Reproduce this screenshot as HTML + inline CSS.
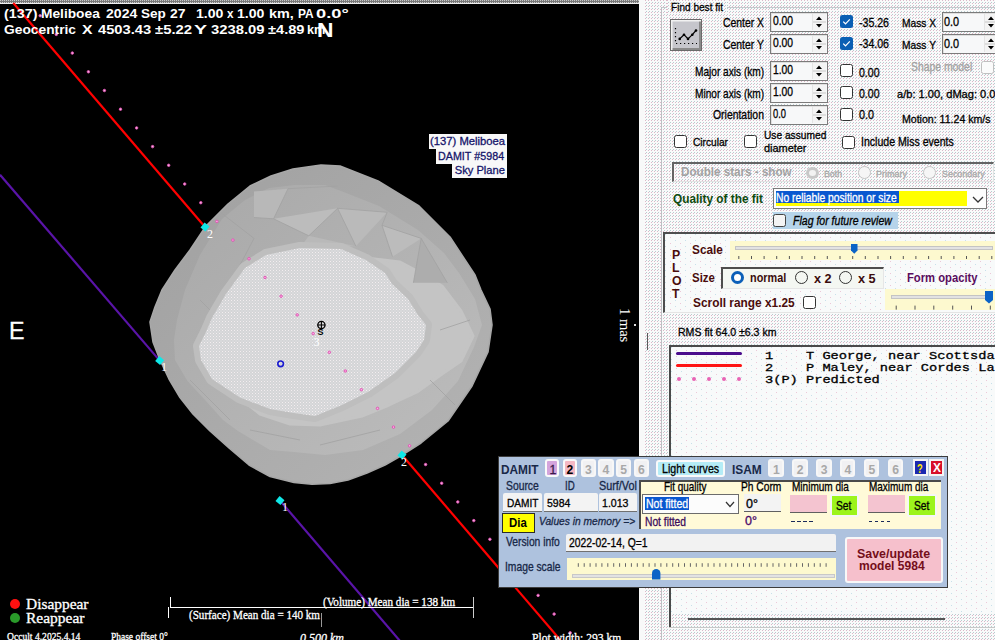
<!DOCTYPE html><html><head><meta charset="utf-8"><style>
*{margin:0;padding:0;box-sizing:border-box}
html,body{width:995px;height:640px;overflow:hidden}
body{position:relative;font-family:'Liberation Sans',sans-serif;font-size:12px;color:#000;background-color:#f9fafa;background-image:conic-gradient(at 1px 1px,transparent 270deg,#dcb8c8 0),conic-gradient(at 1px 1px,transparent 270deg,#b8ccd0 0);background-size:3px 3px,3px 3px;background-position:0 0,1px 2px;}
.a{position:absolute;white-space:nowrap}
</style></head><body><div style="position:absolute;left:0;top:0;width:639px;height:640px;background:#000;overflow:hidden">
<div style="position:absolute;left:0px;top:0px;width:640px;height:3px;background-color:#7a7a7a;background-image:conic-gradient(at 1px 1px,transparent 270deg,#c8c8c8 0);background-size:2px 2px"></div>
<div style="position:absolute;left:0px;top:3px;width:639px;height:1px;background:#f0f0f0"></div>
<svg width="639" height="640" style="position:absolute;left:0;top:0">
<defs><linearGradient id="ga" x1="0" y1="0" x2="1" y2="1"><stop offset="0" stop-color="#a0a0a0"/><stop offset="1" stop-color="#b4b4b4"/></linearGradient><linearGradient id="gb" x1="0" y1="0" x2="1" y2="1"><stop offset="0" stop-color="#a8a8a8"/><stop offset="1" stop-color="#bdbdbd"/></linearGradient><pattern id="dd" width="3" height="3" patternUnits="userSpaceOnUse"><rect width="1" height="1" fill="#f2eef0"/><rect x="1.5" y="1.5" width="1" height="1" fill="#e4e8ec"/></pattern></defs>
<line x1="13.3" y1="3" x2="205" y2="227" stroke="#ff0000" stroke-width="2.2"/>
<line x1="402" y1="455" x2="562" y2="642" stroke="#ff0000" stroke-width="2.2"/>
<line x1="0" y1="174.7" x2="159.7" y2="360.6" stroke="#5a14a8" stroke-width="2.2"/>
<line x1="280" y1="500.6" x2="400" y2="641" stroke="#5a14a8" stroke-width="2.2"/>
<polygon points="150,322 155,307 162,290 175,270 190,250 206,226 228,204 250,186 271,176 293,169 321,165 340,166 378,181 419,206 450,237 475,275 481,290 490,309 492,325 488,352 472,386 448,421 421,443 399,457 385,465 367,473 348,480 330,483.5 312,484.2 294,482.4 276,478 270,476.5 249,465 229,448 210,431 193,414 180,397.5 169,379 160,360 153,342" fill="url(#ga)" stroke="#a8a8a8" stroke-width="1.6" stroke-linejoin="round"/>
<polygon points="325,185 341,191 379,206 418,230 444,253 459,273 475,299 482,325 474,347 458,381 432,410 400,434 363,450 325,455 294,452 270,450 238,431 223,420 206,401 187.5,381 175,360 174,340 177,320 185,290 200,255 222,219 245,200 269,188 295,185" fill="url(#gb)"/>
<polygon points="366,258 400,262 417,271 442,286 461,311 473,336 461,361 442,374 417,392 389,405 362,416 320,425 290,424 260,414 240,398 300,300" fill="#c4c4c4" stroke="#c4c4c4" stroke-width="3" stroke-linejoin="round"/>
<polygon points="273.6,218.8 337.6,208.3 308.8,235.8" fill="#bcbcbc"/>
<polygon points="337.6,208.3 387.2,212.3 355.9,246.2" fill="#bababa"/>
<polygon points="382,225.3 421.2,238.4 392.5,256.7" fill="#bcbcbc"/>
<polygon points="254,191.4 288,188.7 273.6,218.8 254,217.5" fill="#b8b8b8"/>
<polygon points="421.2,238.4 447.3,282.8 413.4,282.8" fill="#adadad"/>
<polygon points="308.8,235.8 355.9,246.2 300,248" fill="#b9b9b9"/>
<line x1="273.6" y1="218.8" x2="308.8" y2="235.8" stroke="#a2a2a2" stroke-width="0.8"/>
<line x1="273.6" y1="218.8" x2="288" y2="188.7" stroke="#a2a2a2" stroke-width="0.8"/>
<line x1="308.8" y1="235.8" x2="337.6" y2="208.3" stroke="#a2a2a2" stroke-width="0.8"/>
<line x1="337.6" y1="208.3" x2="355.9" y2="246.2" stroke="#a2a2a2" stroke-width="0.8"/>
<line x1="337.6" y1="208.3" x2="387.2" y2="212.3" stroke="#a2a2a2" stroke-width="0.8"/>
<line x1="382" y1="225.3" x2="392.5" y2="256.7" stroke="#a2a2a2" stroke-width="0.8"/>
<line x1="382" y1="225.3" x2="421.2" y2="238.4" stroke="#a2a2a2" stroke-width="0.8"/>
<line x1="421.2" y1="238.4" x2="413.4" y2="282.8" stroke="#a2a2a2" stroke-width="0.8"/>
<line x1="421.2" y1="238.4" x2="447.3" y2="282.8" stroke="#a2a2a2" stroke-width="0.8"/>
<line x1="254" y1="217.5" x2="273.6" y2="218.8" stroke="#a2a2a2" stroke-width="0.8"/>
<line x1="220" y1="212" x2="254" y2="238.4" stroke="#a2a2a2" stroke-width="0.8"/>
<line x1="254" y1="238.4" x2="240" y2="265" stroke="#a2a2a2" stroke-width="0.8"/>
<line x1="288" y1="188.7" x2="337.6" y2="186" stroke="#a2a2a2" stroke-width="0.8"/>
<line x1="387.2" y1="212.3" x2="382" y2="225.3" stroke="#a2a2a2" stroke-width="0.8"/>
<line x1="200" y1="300" x2="230" y2="330" stroke="#a2a2a2" stroke-width="0.8"/>
<line x1="190" y1="380" x2="230" y2="420" stroke="#a2a2a2" stroke-width="0.8"/>
<line x1="250" y1="430" x2="300" y2="440" stroke="#a2a2a2" stroke-width="0.8"/>
<line x1="320" y1="445" x2="380" y2="430" stroke="#a2a2a2" stroke-width="0.8"/>
<line x1="440" y1="330" x2="470" y2="320" stroke="#a2a2a2" stroke-width="0.8"/>
<line x1="430" y1="380" x2="455" y2="405" stroke="#a2a2a2" stroke-width="0.8"/>
<polygon points="226,294 245,268 266,255 300,248 341,249 366,260 385,273 392,284 408,299 418,315 426,325 424,340 416,352 395,373 368,392 342,405 315,416 294,413 270,409 240,397.5 212,379 201,360 199,346 206,332 212,318" fill="#d4d4d6" stroke="#bebebe" stroke-width="12" stroke-linejoin="round"/>
<polygon points="226,294 245,268 266,255 300,248 341,249 366,260 385,273 392,284 408,299 418,315 426,325 424,340 416,352 395,373 368,392 342,405 315,416 294,413 270,409 240,397.5 212,379 201,360 199,346 206,332 212,318" fill="#d4d4d6"/>
<polygon points="226,294 245,268 266,255 300,248 341,249 366,260 385,273 392,284 408,299 418,315 426,325 424,340 416,352 395,373 368,392 342,405 315,416 294,413 270,409 240,397.5 212,379 201,360 199,346 206,332 212,318" fill="url(#dd)"/>
<circle cx="40.2" cy="15.7" r="1.25" fill="#f8b0e4" stroke="#e04cb0" stroke-width="0.9"/>
<circle cx="56.3" cy="34.4" r="1.25" fill="#f8b0e4" stroke="#e04cb0" stroke-width="0.9"/>
<circle cx="72.3" cy="53.1" r="1.25" fill="#f8b0e4" stroke="#e04cb0" stroke-width="0.9"/>
<circle cx="88.4" cy="71.8" r="1.25" fill="#f8b0e4" stroke="#e04cb0" stroke-width="0.9"/>
<circle cx="104.4" cy="90.5" r="1.25" fill="#f8b0e4" stroke="#e04cb0" stroke-width="0.9"/>
<circle cx="120.5" cy="109.2" r="1.25" fill="#f8b0e4" stroke="#e04cb0" stroke-width="0.9"/>
<circle cx="136.6" cy="127.9" r="1.25" fill="#f8b0e4" stroke="#e04cb0" stroke-width="0.9"/>
<circle cx="152.6" cy="146.6" r="1.25" fill="#f8b0e4" stroke="#e04cb0" stroke-width="0.9"/>
<circle cx="168.7" cy="165.3" r="1.25" fill="#f8b0e4" stroke="#e04cb0" stroke-width="0.9"/>
<circle cx="184.7" cy="184.0" r="1.25" fill="#f8b0e4" stroke="#e04cb0" stroke-width="0.9"/>
<circle cx="200.8" cy="202.7" r="1.25" fill="#f8b0e4" stroke="#e04cb0" stroke-width="0.9"/>
<circle cx="216.9" cy="221.4" r="1.25" fill="#f8b0e4" stroke="#e04cb0" stroke-width="0.9"/>
<circle cx="232.9" cy="240.1" r="1.25" fill="#f8b0e4" stroke="#e04cb0" stroke-width="0.9"/>
<circle cx="249.0" cy="258.8" r="1.25" fill="#f8b0e4" stroke="#e04cb0" stroke-width="0.9"/>
<circle cx="265.0" cy="277.5" r="1.25" fill="#f8b0e4" stroke="#e04cb0" stroke-width="0.9"/>
<circle cx="281.1" cy="296.2" r="1.25" fill="#f8b0e4" stroke="#e04cb0" stroke-width="0.9"/>
<circle cx="297.2" cy="314.9" r="1.25" fill="#f8b0e4" stroke="#e04cb0" stroke-width="0.9"/>
<circle cx="313.2" cy="333.6" r="1.25" fill="#f8b0e4" stroke="#e04cb0" stroke-width="0.9"/>
<circle cx="329.3" cy="352.3" r="1.25" fill="#f8b0e4" stroke="#e04cb0" stroke-width="0.9"/>
<circle cx="345.3" cy="371.0" r="1.25" fill="#f8b0e4" stroke="#e04cb0" stroke-width="0.9"/>
<circle cx="361.4" cy="389.7" r="1.25" fill="#f8b0e4" stroke="#e04cb0" stroke-width="0.9"/>
<circle cx="377.5" cy="408.4" r="1.25" fill="#f8b0e4" stroke="#e04cb0" stroke-width="0.9"/>
<circle cx="393.5" cy="427.1" r="1.25" fill="#f8b0e4" stroke="#e04cb0" stroke-width="0.9"/>
<circle cx="409.6" cy="445.8" r="1.25" fill="#f8b0e4" stroke="#e04cb0" stroke-width="0.9"/>
<circle cx="425.6" cy="464.5" r="1.25" fill="#f8b0e4" stroke="#e04cb0" stroke-width="0.9"/>
<circle cx="441.7" cy="483.2" r="1.25" fill="#f8b0e4" stroke="#e04cb0" stroke-width="0.9"/>
<circle cx="457.8" cy="501.9" r="1.25" fill="#f8b0e4" stroke="#e04cb0" stroke-width="0.9"/>
<circle cx="473.8" cy="520.6" r="1.25" fill="#f8b0e4" stroke="#e04cb0" stroke-width="0.9"/>
<circle cx="489.9" cy="539.3" r="1.25" fill="#f8b0e4" stroke="#e04cb0" stroke-width="0.9"/>
<circle cx="505.9" cy="558.0" r="1.25" fill="#f8b0e4" stroke="#e04cb0" stroke-width="0.9"/>
<circle cx="522.0" cy="576.7" r="1.25" fill="#f8b0e4" stroke="#e04cb0" stroke-width="0.9"/>
<circle cx="538.1" cy="595.4" r="1.25" fill="#f8b0e4" stroke="#e04cb0" stroke-width="0.9"/>
<circle cx="554.1" cy="614.1" r="1.25" fill="#f8b0e4" stroke="#e04cb0" stroke-width="0.9"/>
<circle cx="570.2" cy="632.8" r="1.25" fill="#f8b0e4" stroke="#e04cb0" stroke-width="0.9"/>
<rect x="201.8" y="223.8" width="6.4" height="6.4" fill="#10e8e8" transform="rotate(40 205 227)"/>
<rect x="398.8" y="451.8" width="6.4" height="6.4" fill="#10e8e8" transform="rotate(40 402 455)"/>
<rect x="156.5" y="357.40000000000003" width="6.4" height="6.4" fill="#10e8e8" transform="rotate(40 159.7 360.6)"/>
<rect x="276.8" y="497.40000000000003" width="6.4" height="6.4" fill="#10e8e8" transform="rotate(40 280 500.6)"/>
<text x="207" y="238" font-family="Liberation Serif" font-size="12" fill="#fff">2</text>
<text x="401" y="466" font-family="Liberation Serif" font-size="12" fill="#fff">2</text>
<text x="161" y="371" font-family="Liberation Serif" font-size="12" fill="#fff">1</text>
<text x="282" y="511" font-family="Liberation Serif" font-size="12" fill="#fff">1</text>
<circle cx="321.4" cy="325" r="3.6" fill="none" stroke="#000" stroke-width="1.3"/><path d="M317.5 325 H325.3 M321.4 321 V329" stroke="#000" stroke-width="1.1"/>
<text x="317.5" y="335" font-family="Liberation Sans" font-size="9" font-weight="bold" fill="#000">S</text>
<text x="313.5" y="346" font-family="Liberation Serif" font-size="12" fill="#fff">3</text>
<circle cx="280.6" cy="363.8" r="2.8" fill="none" stroke="#1a1ad0" stroke-width="1.6"/>
</svg>
<div class="a" style="left:3.60px;top:7.22px;font:normal bold 13.62px/13.62px 'Liberation Sans',sans-serif;color:#ffffff;transform:scaleX(1.0513);transform-origin:0 0;">(137)</div>
<div class="a" style="left:40.70px;top:7.22px;font:normal bold 13.62px/13.62px 'Liberation Sans',sans-serif;color:#ffffff;transform:scaleX(1.0098);transform-origin:0 0;">Meliboea</div>
<div class="a" style="left:105.50px;top:7.22px;font:normal bold 13.62px/13.62px 'Liberation Sans',sans-serif;color:#ffffff;transform:scaleX(1.0338);transform-origin:0 0;">2024</div>
<div class="a" style="left:140.70px;top:7.22px;font:normal bold 13.62px/13.62px 'Liberation Sans',sans-serif;color:#ffffff;transform:scaleX(0.9936);transform-origin:0 0;">Sep</div>
<div class="a" style="left:169.50px;top:7.22px;font:normal bold 13.62px/13.62px 'Liberation Sans',sans-serif;color:#ffffff;transform:scaleX(1.0239);transform-origin:0 0;">27</div>
<div class="a" style="left:195.60px;top:7.22px;font:normal bold 13.62px/13.62px 'Liberation Sans',sans-serif;color:#ffffff;transform:scaleX(1.0344);transform-origin:0 0;">1.00</div>
<div class="a" style="left:227.00px;top:7.22px;font:normal bold 13.62px/13.62px 'Liberation Sans',sans-serif;color:#ffffff;transform:scaleX(0.8588);transform-origin:0 0;">x</div>
<div class="a" style="left:237.40px;top:7.22px;font:normal bold 13.62px/13.62px 'Liberation Sans',sans-serif;color:#ffffff;transform:scaleX(1.0344);transform-origin:0 0;">1.00</div>
<div class="a" style="left:268.80px;top:7.22px;font:normal bold 13.62px/13.62px 'Liberation Sans',sans-serif;color:#ffffff;transform:scaleX(1.0575);transform-origin:0 0;">km,</div>
<div class="a" style="left:297.50px;top:7.22px;font:normal bold 13.62px/13.62px 'Liberation Sans',sans-serif;color:#ffffff;transform:scaleX(0.8774);transform-origin:0 0;">PA</div>
<div class="a" style="left:315.80px;top:7.22px;font:normal bold 13.62px/13.62px 'Liberation Sans',sans-serif;color:#ffffff;transform:scaleX(1.3423);transform-origin:0 0;">0.0°</div>
<div class="a" style="left:3.60px;top:23.22px;font:normal bold 13.62px/13.62px 'Liberation Sans',sans-serif;color:#ffffff;transform:scaleX(1.0127);transform-origin:0 0;">Geocentric</div>
<div class="a" style="left:81.70px;top:23.22px;font:normal bold 13.62px/13.62px 'Liberation Sans',sans-serif;color:#ffffff;transform:scaleX(1.1567);transform-origin:0 0;">X</div>
<div class="a" style="left:98.00px;top:23.22px;font:normal bold 13.62px/13.62px 'Liberation Sans',sans-serif;color:#ffffff;transform:scaleX(1.0814);transform-origin:0 0;">4503.43</div>
<div class="a" style="left:154.60px;top:23.22px;font:normal bold 13.62px/13.62px 'Liberation Sans',sans-serif;color:#ffffff;transform:scaleX(1.0926);transform-origin:0 0;">±5.22</div>
<div class="a" style="left:194.30px;top:23.22px;font:normal bold 13.62px/13.62px 'Liberation Sans',sans-serif;color:#ffffff;transform:scaleX(1.4432);transform-origin:0 0;">Y</div>
<div class="a" style="left:211.30px;top:23.22px;font:normal bold 13.62px/13.62px 'Liberation Sans',sans-serif;color:#ffffff;transform:scaleX(1.0875);transform-origin:0 0;">3238.09</div>
<div class="a" style="left:267.50px;top:23.22px;font:normal bold 13.62px/13.62px 'Liberation Sans',sans-serif;color:#ffffff;transform:scaleX(1.0749);transform-origin:0 0;">±4.89</div>
<div class="a" style="left:306.60px;top:23.22px;font:normal bold 13.62px/13.62px 'Liberation Sans',sans-serif;color:#ffffff;transform:scaleX(0.9354);transform-origin:0 0;">km</div>
<div class="a" style="left:316.50px;top:19.66px;font:normal bold 20.87px/20.87px 'Liberation Sans',sans-serif;color:#ffffff;transform:scaleX(1.0953);transform-origin:0 0;">N</div>
<div class="a" style="left:9.00px;top:318.76px;font:normal normal 24.64px/24.64px 'Liberation Sans',sans-serif;color:#ffffff;-webkit-text-stroke:0.3px #ffffff;transform:scaleX(0.9437);transform-origin:0 0;">E</div>
<div class="a" style="left:618px;top:307.5px;width:14px;height:36px;"><div style="position:absolute;left:14px;top:0;transform:rotate(90deg);transform-origin:0 0;font:14.5px/14px 'Liberation Serif',serif;color:#fff">1 mas</div></div>
<div style="position:absolute;left:634px;top:324px;width:2px;height:2px;background:#ddd"></div>
<div style="position:absolute;left:9.5px;top:599px;width:10px;height:10px;border-radius:50%;background:#ff1010"></div>
<div style="position:absolute;left:9.5px;top:612.5px;width:10px;height:10px;border-radius:50%;background:#2a9a2a"></div>
<div class="a" style="left:26.20px;top:597.14px;font:normal normal 14.77px/14.77px 'Liberation Serif',serif;color:#ffffff;-webkit-text-stroke:0.3px #ffffff;transform:scaleX(1.0436);transform-origin:0 0;">Disappear</div>
<div class="a" style="left:26.20px;top:610.64px;font:normal normal 14.77px/14.77px 'Liberation Serif',serif;color:#ffffff;-webkit-text-stroke:0.3px #ffffff;transform:scaleX(1.0487);transform-origin:0 0;">Reappear</div>
<div class="a" style="left:7.20px;top:630.86px;font:normal normal 10.77px/10.77px 'Liberation Serif',serif;color:#ffffff;-webkit-text-stroke:0.3px #ffffff;transform:scaleX(0.8895);transform-origin:0 0;">Occult&#160;4.2025.4.14</div>
<div class="a" style="left:110.70px;top:630.86px;font:normal normal 10.77px/10.77px 'Liberation Serif',serif;color:#ffffff;-webkit-text-stroke:0.3px #ffffff;transform:scaleX(0.8787);transform-origin:0 0;">Phase&#160;offset&#160;0°</div>
<div style="position:absolute;left:170px;top:607px;width:304px;height:1px;background:#fff"></div>
<div style="position:absolute;left:170px;top:597px;width:1px;height:11px;background:#fff"></div>
<div style="position:absolute;left:168px;top:607px;width:1px;height:11px;background:#fff"></div>
<div style="position:absolute;left:473px;top:597px;width:1px;height:21px;background:#ccc"></div>
<div style="position:absolute;left:321px;top:613px;width:1px;height:14px;background:#999"></div>
<div class="a" style="left:323.20px;top:596.34px;font:normal normal 12.00px/12.00px 'Liberation Serif',serif;color:#ffffff;-webkit-text-stroke:0.3px #ffffff;transform:scaleX(0.9290);transform-origin:0 0;">(Volume)&#160;Mean&#160;dia&#160;=&#160;138&#160;km</div>
<div class="a" style="left:189.00px;top:608.83px;font:normal normal 12.62px/12.62px 'Liberation Serif',serif;color:#ffffff;-webkit-text-stroke:0.3px #ffffff;transform:scaleX(0.8797);transform-origin:0 0;">(Surface)&#160;Mean&#160;dia&#160;=&#160;140&#160;km</div>
<div class="a" style="left:300.10px;top:630.95px;font:italic normal 13.08px/13.08px 'Liberation Serif',serif;color:#ffffff;-webkit-text-stroke:0.3px #ffffff;transform:scaleX(0.9167);transform-origin:0 0;">0.500&#160;km</div>
<div class="a" style="left:531.70px;top:630.95px;font:normal normal 13.08px/13.08px 'Liberation Serif',serif;color:#ffffff;-webkit-text-stroke:0.3px #ffffff;transform:scaleX(0.8884);transform-origin:0 0;">Plot&#160;width:&#160;293&#160;km</div>
</div>
<div style="position:absolute;left:429px;top:134px;width:78px;height:15px;background:#f8f8f8"></div>
<div style="position:absolute;left:436px;top:149px;width:71px;height:15px;background:#f8f8f8"></div>
<div style="position:absolute;left:452px;top:164px;width:55px;height:14px;background:#f8f8f8"></div>
<div class="a" style="left:430.00px;top:135.91px;font:normal normal 11.16px/11.16px 'Liberation Sans',sans-serif;color:#14146a;-webkit-text-stroke:0.3px #14146a;transform:scaleX(1.0092);transform-origin:0 0;">(137)&#160;Meliboea</div>
<div class="a" style="left:437.90px;top:151.01px;font:normal normal 11.16px/11.16px 'Liberation Sans',sans-serif;color:#14146a;-webkit-text-stroke:0.3px #14146a;transform:scaleX(0.9603);transform-origin:0 0;">DAMIT&#160;#5984</div>
<div class="a" style="left:454.70px;top:164.51px;font:normal normal 11.16px/11.16px 'Liberation Sans',sans-serif;color:#14146a;-webkit-text-stroke:0.3px #14146a;">Sky&#160;Plane</div>
<div style="position:absolute;left:639px;top:0px;width:5px;height:640px;background:#f8f9f9"></div>
<div style="position:absolute;left:646.5px;top:333px;width:1.2px;height:17px;background:#5a5a5a"></div>
<div style="position:absolute;left:661px;top:7px;width:334px;height:1px;background:#c4c8cc"></div>
<div style="position:absolute;left:661px;top:7px;width:1px;height:633px;background:#bcc0c4"></div>
<div style="position:absolute;left:667px;top:0px;width:60px;height:13px;background-color:#f9fafa;background-image:conic-gradient(at 1px 1px,transparent 270deg,#dcb8c8 0),conic-gradient(at 1px 1px,transparent 270deg,#b8ccd0 0);background-size:3px 3px,3px 3px;background-position:0 0,1px 2px;"></div>
<div class="a" style="left:670.50px;top:1.42px;font:normal normal 11.74px/11.74px 'Liberation Sans',sans-serif;color:#000;-webkit-text-stroke:0.3px #000;transform:scaleX(0.8585);transform-origin:0 0;">Find&#160;best&#160;fit</div>
<div style="position:absolute;left:669.5px;top:18.5px;width:32.5px;height:32.5px;background:#c6c6cc;border:1px solid #6a6a6a;box-shadow:inset 1.5px 1.5px 0 #f2f2f2,inset -2px -2px 0 #8a8a8a"></div>
<svg width="32" height="32" style="position:absolute;left:670px;top:19px"><path d="M9.7 19.9 L14 15.7 L18 19.9 L22.3 15.7 L26 11.5" stroke="#000" stroke-width="1.2" fill="none"/><g fill="#000"><circle cx="9.7" cy="19.9" r="1.3"/><circle cx="14" cy="15.7" r="1.3"/><circle cx="18" cy="19.9" r="1.3"/><circle cx="22.3" cy="15.7" r="1.3"/><circle cx="26" cy="11.5" r="1.3"/></g><path d="M5.5 9 V24.5 H27" stroke="#000" stroke-width="1.2" stroke-dasharray="1.2 2.8" fill="none"/></svg>
<div class="a" style="left:722.60px;top:16.74px;font:normal normal 12.90px/12.90px 'Liberation Sans',sans-serif;color:#000;-webkit-text-stroke:0.3px #000;transform:scaleX(0.8050);transform-origin:0 0;">Center&#160;X</div>
<div class="a" style="left:722.60px;top:38.84px;font:normal normal 12.90px/12.90px 'Liberation Sans',sans-serif;color:#000;-webkit-text-stroke:0.3px #000;transform:scaleX(0.8050);transform-origin:0 0;">Center&#160;Y</div>
<div class="a" style="left:694.50px;top:65.94px;font:normal normal 12.90px/12.90px 'Liberation Sans',sans-serif;color:#000;-webkit-text-stroke:0.3px #000;transform:scaleX(0.7843);transform-origin:0 0;">Major&#160;axis&#160;(km)</div>
<div class="a" style="left:694.50px;top:87.64px;font:normal normal 12.90px/12.90px 'Liberation Sans',sans-serif;color:#000;-webkit-text-stroke:0.3px #000;transform:scaleX(0.7843);transform-origin:0 0;">Minor&#160;axis&#160;(km)</div>
<div class="a" style="left:712.60px;top:108.84px;font:normal normal 12.90px/12.90px 'Liberation Sans',sans-serif;color:#000;-webkit-text-stroke:0.3px #000;transform:scaleX(0.8082);transform-origin:0 0;">Orientation</div>
<div style="position:absolute;left:770px;top:12px;width:58px;height:20px;background:#f7f8f9;border:1px solid #7b7b7b;box-shadow:inset 1px 1px 0 #e0e0e0"></div>
<svg width="15" height="17" style="position:absolute;left:812px;top:14px"><rect x="0" y="0" width="14" height="16" fill="#f4f4f4"/><line x1="0.5" y1="0" x2="0.5" y2="16" stroke="#e4e4e4"/><line x1="1" y1="8" x2="14" y2="8" stroke="#c8c8c8"/><path d="M4 6 L7 2.5 L10 6Z M4 10 L7 13.5 L10 10Z" fill="#000"/></svg>
<div class="a" style="left:772.50px;top:15.05px;font:normal normal 12.17px/12.17px 'Liberation Sans',sans-serif;color:#000;-webkit-text-stroke:0.3px #000;transform:scaleX(0.8496);transform-origin:0 0;">0.00</div>
<div style="position:absolute;left:770px;top:34px;width:58px;height:20px;background:#f7f8f9;border:1px solid #7b7b7b;box-shadow:inset 1px 1px 0 #e0e0e0"></div>
<svg width="15" height="17" style="position:absolute;left:812px;top:36px"><rect x="0" y="0" width="14" height="16" fill="#f4f4f4"/><line x1="0.5" y1="0" x2="0.5" y2="16" stroke="#e4e4e4"/><line x1="1" y1="8" x2="14" y2="8" stroke="#c8c8c8"/><path d="M4 6 L7 2.5 L10 6Z M4 10 L7 13.5 L10 10Z" fill="#000"/></svg>
<div class="a" style="left:772.50px;top:37.05px;font:normal normal 12.17px/12.17px 'Liberation Sans',sans-serif;color:#000;-webkit-text-stroke:0.3px #000;transform:scaleX(0.8496);transform-origin:0 0;">0.00</div>
<div style="position:absolute;left:770px;top:61px;width:58px;height:20px;background:#f7f8f9;border:1px solid #7b7b7b;box-shadow:inset 1px 1px 0 #e0e0e0"></div>
<svg width="15" height="17" style="position:absolute;left:812px;top:63px"><rect x="0" y="0" width="14" height="16" fill="#f4f4f4"/><line x1="0.5" y1="0" x2="0.5" y2="16" stroke="#e4e4e4"/><line x1="1" y1="8" x2="14" y2="8" stroke="#c8c8c8"/><path d="M4 6 L7 2.5 L10 6Z M4 10 L7 13.5 L10 10Z" fill="#000"/></svg>
<div class="a" style="left:772.50px;top:64.05px;font:normal normal 12.17px/12.17px 'Liberation Sans',sans-serif;color:#000;-webkit-text-stroke:0.3px #000;transform:scaleX(0.8496);transform-origin:0 0;">1.00</div>
<div style="position:absolute;left:770px;top:83px;width:58px;height:20px;background:#f7f8f9;border:1px solid #7b7b7b;box-shadow:inset 1px 1px 0 #e0e0e0"></div>
<svg width="15" height="17" style="position:absolute;left:812px;top:85px"><rect x="0" y="0" width="14" height="16" fill="#f4f4f4"/><line x1="0.5" y1="0" x2="0.5" y2="16" stroke="#e4e4e4"/><line x1="1" y1="8" x2="14" y2="8" stroke="#c8c8c8"/><path d="M4 6 L7 2.5 L10 6Z M4 10 L7 13.5 L10 10Z" fill="#000"/></svg>
<div class="a" style="left:772.50px;top:86.05px;font:normal normal 12.17px/12.17px 'Liberation Sans',sans-serif;color:#000;-webkit-text-stroke:0.3px #000;transform:scaleX(0.8496);transform-origin:0 0;">1.00</div>
<div style="position:absolute;left:770px;top:105px;width:58px;height:20px;background:#f7f8f9;border:1px solid #7b7b7b;box-shadow:inset 1px 1px 0 #e0e0e0"></div>
<svg width="15" height="17" style="position:absolute;left:812px;top:107px"><rect x="0" y="0" width="14" height="16" fill="#f4f4f4"/><line x1="0.5" y1="0" x2="0.5" y2="16" stroke="#e4e4e4"/><line x1="1" y1="8" x2="14" y2="8" stroke="#c8c8c8"/><path d="M4 6 L7 2.5 L10 6Z M4 10 L7 13.5 L10 10Z" fill="#000"/></svg>
<div class="a" style="left:772.50px;top:108.05px;font:normal normal 12.17px/12.17px 'Liberation Sans',sans-serif;color:#000;-webkit-text-stroke:0.3px #000;transform:scaleX(0.7693);transform-origin:0 0;">0.0</div>
<svg width="13" height="13" style="position:absolute;left:840px;top:15px"><rect x="0" y="0" width="13" height="13" rx="2.5" fill="#0a5fb4"/><path d="M3.2 6.6 L5.5 8.8 L9.8 4.4" stroke="#fff" stroke-width="1.2" fill="none"/></svg>
<div class="a" style="left:859.00px;top:16.65px;font:normal normal 12.17px/12.17px 'Liberation Sans',sans-serif;color:#000;-webkit-text-stroke:0.3px #000;transform:scaleX(0.8704);transform-origin:0 0;">-35.26</div>
<svg width="13" height="13" style="position:absolute;left:840px;top:37px"><rect x="0" y="0" width="13" height="13" rx="2.5" fill="#0a5fb4"/><path d="M3.2 6.6 L5.5 8.8 L9.8 4.4" stroke="#fff" stroke-width="1.2" fill="none"/></svg>
<div class="a" style="left:859.00px;top:38.45px;font:normal normal 12.17px/12.17px 'Liberation Sans',sans-serif;color:#000;-webkit-text-stroke:0.3px #000;transform:scaleX(0.8704);transform-origin:0 0;">-34.06</div>
<div style="position:absolute;left:840px;top:64px;width:13px;height:13px;border:1px solid #333;border-radius:2.5px;background:#fff"></div>
<div class="a" style="left:859.00px;top:66.55px;font:normal normal 12.17px/12.17px 'Liberation Sans',sans-serif;color:#000;-webkit-text-stroke:0.3px #000;transform:scaleX(0.8665);transform-origin:0 0;">0.00</div>
<div style="position:absolute;left:840px;top:86px;width:13px;height:13px;border:1px solid #333;border-radius:2.5px;background:#fff"></div>
<div class="a" style="left:859.00px;top:88.25px;font:normal normal 12.17px/12.17px 'Liberation Sans',sans-serif;color:#000;-webkit-text-stroke:0.3px #000;transform:scaleX(0.8665);transform-origin:0 0;">0.00</div>
<div style="position:absolute;left:840px;top:108px;width:13px;height:13px;border:1px solid #333;border-radius:2.5px;background:#fff"></div>
<div class="a" style="left:859.00px;top:108.75px;font:normal normal 12.17px/12.17px 'Liberation Sans',sans-serif;color:#000;-webkit-text-stroke:0.3px #000;transform:scaleX(0.8876);transform-origin:0 0;">0.0</div>
<div class="a" style="left:901.80px;top:17.74px;font:normal normal 11.59px/11.59px 'Liberation Sans',sans-serif;color:#000;-webkit-text-stroke:0.3px #000;transform:scaleX(0.8808);transform-origin:0 0;">Mass&#160;X</div>
<div class="a" style="left:901.80px;top:39.54px;font:normal normal 11.59px/11.59px 'Liberation Sans',sans-serif;color:#000;-webkit-text-stroke:0.3px #000;transform:scaleX(0.8808);transform-origin:0 0;">Mass&#160;Y</div>
<div style="position:absolute;left:942px;top:12px;width:58px;height:20px;background:#f7f8f9;border:1px solid #7b7b7b;box-shadow:inset 1px 1px 0 #e0e0e0"></div>
<svg width="15" height="17" style="position:absolute;left:984px;top:14px"><rect x="0" y="0" width="14" height="16" fill="#f4f4f4"/><line x1="0.5" y1="0" x2="0.5" y2="16" stroke="#e4e4e4"/><line x1="1" y1="8" x2="14" y2="8" stroke="#c8c8c8"/><path d="M4 6 L7 2.5 L10 6Z M4 10 L7 13.5 L10 10Z" fill="#000"/></svg>
<div style="position:absolute;left:942px;top:34px;width:58px;height:20px;background:#f7f8f9;border:1px solid #7b7b7b;box-shadow:inset 1px 1px 0 #e0e0e0"></div>
<svg width="15" height="17" style="position:absolute;left:984px;top:36px"><rect x="0" y="0" width="14" height="16" fill="#f4f4f4"/><line x1="0.5" y1="0" x2="0.5" y2="16" stroke="#e4e4e4"/><line x1="1" y1="8" x2="14" y2="8" stroke="#c8c8c8"/><path d="M4 6 L7 2.5 L10 6Z M4 10 L7 13.5 L10 10Z" fill="#000"/></svg>
<div class="a" style="left:944.40px;top:15.65px;font:normal normal 12.17px/12.17px 'Liberation Sans',sans-serif;color:#000;-webkit-text-stroke:0.3px #000;transform:scaleX(0.8936);transform-origin:0 0;">0.0</div>
<div class="a" style="left:944.40px;top:37.75px;font:normal normal 12.17px/12.17px 'Liberation Sans',sans-serif;color:#000;-webkit-text-stroke:0.3px #000;transform:scaleX(0.8936);transform-origin:0 0;">0.0</div>
<div class="a" style="left:911.40px;top:61.50px;font:normal normal 11.88px/11.88px 'Liberation Sans',sans-serif;color:#a3a3a3;-webkit-text-stroke:0.3px #a3a3a3;transform:scaleX(0.8745);transform-origin:0 0;">Shape&#160;model</div>
<div style="position:absolute;left:981px;top:61px;width:13px;height:13px;border:1px solid #c0c0c0;border-radius:2.5px;background:#fbfbfb"></div>
<div class="a" style="left:897.40px;top:89.73px;font:normal normal 10.43px/10.43px 'Liberation Sans',sans-serif;color:#000;-webkit-text-stroke:0.3px #000;transform:scaleX(1.0619);transform-origin:0 0;">a/b:&#160;1.00,&#160;dMag:&#160;0.00</div>
<div class="a" style="left:901.70px;top:114.44px;font:normal normal 11.01px/11.01px 'Liberation Sans',sans-serif;color:#000;-webkit-text-stroke:0.3px #000;transform:scaleX(0.9608);transform-origin:0 0;">Motion:&#160;11.24&#160;km/s</div>
<div style="position:absolute;left:674px;top:135px;width:13px;height:13px;border:1px solid #333;border-radius:2.5px;background:#fff"></div>
<div class="a" style="left:692.70px;top:136.77px;font:normal normal 11.45px/11.45px 'Liberation Sans',sans-serif;color:#000;-webkit-text-stroke:0.3px #000;transform:scaleX(0.8883);transform-origin:0 0;">Circular</div>
<div style="position:absolute;left:744px;top:135px;width:13px;height:13px;border:1px solid #333;border-radius:2.5px;background:#fff"></div>
<div class="a" style="left:763.50px;top:130.44px;font:normal normal 11.01px/11.01px 'Liberation Sans',sans-serif;color:#000;-webkit-text-stroke:0.3px #000;transform:scaleX(0.9264);transform-origin:0 0;">Use&#160;assumed</div>
<div class="a" style="left:763.50px;top:143.14px;font:normal normal 11.01px/11.01px 'Liberation Sans',sans-serif;color:#000;-webkit-text-stroke:0.3px #000;transform:scaleX(0.9931);transform-origin:0 0;">diameter</div>
<div style="position:absolute;left:842px;top:136px;width:13px;height:13px;border:1px solid #333;border-radius:2.5px;background:#fff"></div>
<div class="a" style="left:861.30px;top:136.33px;font:normal normal 12.32px/12.32px 'Liberation Sans',sans-serif;color:#000;-webkit-text-stroke:0.3px #000;transform:scaleX(0.8584);transform-origin:0 0;">Include&#160;Miss&#160;events</div>
<div style="position:absolute;left:672px;top:162px;width:321.5px;height:20px;border:solid #646464;border-width:2px 1px 1px 2px;border-color:#646464 #e2e2e2 #e2e2e2 #646464"></div>
<div class="a" style="left:680.70px;top:165.54px;font:normal bold 12.90px/12.90px 'Liberation Sans',sans-serif;color:#a2a2a2;transform:scaleX(0.9033);transform-origin:0 0;">Double&#160;stars&#160;-&#160;show</div>
<div style="position:absolute;left:806px;top:167px;width:13px;height:12px;border-radius:50%;border:3px solid #c8c8c8;background:#f2f2f2"></div>
<div class="a" style="left:824.40px;top:169.32px;font:normal normal 9.86px/9.86px 'Liberation Sans',sans-serif;color:#a8a8a8;-webkit-text-stroke:0.3px #a8a8a8;transform:scaleX(0.8938);transform-origin:0 0;">Both</div>
<div style="position:absolute;left:858px;top:166px;width:13px;height:13px;border-radius:50%;border:1px solid #c4c4c4;background:#f6f6f6"></div>
<div class="a" style="left:876.30px;top:169.32px;font:normal normal 9.86px/9.86px 'Liberation Sans',sans-serif;color:#a8a8a8;-webkit-text-stroke:0.3px #a8a8a8;transform:scaleX(0.9114);transform-origin:0 0;">Primary</div>
<div style="position:absolute;left:923px;top:166px;width:13px;height:13px;border-radius:50%;border:1px solid #c4c4c4;background:#f6f6f6"></div>
<div class="a" style="left:941.60px;top:169.32px;font:normal normal 9.86px/9.86px 'Liberation Sans',sans-serif;color:#a8a8a8;-webkit-text-stroke:0.3px #a8a8a8;transform:scaleX(0.9052);transform-origin:0 0;">Secondary</div>
<div class="a" style="left:673.40px;top:192.98px;font:normal bold 12.03px/12.03px 'Liberation Sans',sans-serif;color:#0e4a0e;transform:scaleX(0.9842);transform-origin:0 0;">Quality&#160;of&#160;the&#160;fit</div>
<div style="position:absolute;left:773px;top:188px;width:214px;height:21px;background:#fdfdfd;border:1px solid #7a7a7a"></div>
<div style="position:absolute;left:776px;top:191px;width:191px;height:15px;background:#ffff00"></div>
<div style="position:absolute;left:776px;top:191px;width:123px;height:12px;background:#0a58d0"></div>
<div class="a" style="left:776.40px;top:192.15px;font:normal normal 12.17px/12.17px 'Liberation Sans',sans-serif;color:#fff;-webkit-text-stroke:0.3px #fff;transform:scaleX(0.8459);transform-origin:0 0;">No&#160;reliable&#160;position&#160;or&#160;size</div>
<svg width="14" height="10" style="position:absolute;left:971px;top:195px"><path d="M2 2 L7 7 L12 2" stroke="#333" stroke-width="1.3" fill="none"/></svg>
<div style="position:absolute;left:773px;top:212px;width:125px;height:17px;background:#b6d4ea"></div>
<div style="position:absolute;left:773px;top:213.5px;width:13px;height:13px;border:1px solid #444;border-radius:2.5px;background:#f4f4f4"></div>
<div class="a" style="left:792.80px;top:215.05px;font:italic normal 12.17px/12.17px 'Liberation Sans',sans-serif;color:#000;-webkit-text-stroke:0.3px #000;transform:scaleX(0.8662);transform-origin:0 0;">Flag&#160;for&#160;future&#160;review</div>
<div style="position:absolute;left:663px;top:232px;width:332px;height:81px;background-color:#f8fafa;background-image:conic-gradient(at 1px 1px,transparent 270deg,#c8e0ea 0),conic-gradient(at 1px 1px,transparent 270deg,#ecc8d8 0);background-size:10px 6px,10px 6px;background-position:0 0,5px 3px;border-left:2px solid #4e4e4e;border-top:2px solid #4e4e4e;border-bottom:1px solid #e4e4e4"></div>
<div class="a" style="left:672.00px;top:248.83px;font:normal bold 12.32px/12.32px 'Liberation Sans',sans-serif;color:#4a0c0c;">P</div>
<div class="a" style="left:672.00px;top:261.73px;font:normal bold 12.32px/12.32px 'Liberation Sans',sans-serif;color:#4a0c0c;">L</div>
<div class="a" style="left:672.00px;top:275.33px;font:normal bold 12.32px/12.32px 'Liberation Sans',sans-serif;color:#4a0c0c;">O</div>
<div class="a" style="left:672.00px;top:288.33px;font:normal bold 12.32px/12.32px 'Liberation Sans',sans-serif;color:#4a0c0c;">T</div>
<div class="a" style="left:691.80px;top:244.46px;font:normal bold 12.75px/12.75px 'Liberation Sans',sans-serif;color:#4a0c0c;transform:scaleX(0.9274);transform-origin:0 0;">Scale</div>
<div style="position:absolute;left:730px;top:241px;width:265px;height:19px;background:#fdf9cf"></div>
<div style="position:absolute;left:735px;top:246px;width:258px;height:4px;background:#e2e2e2;border:1px solid #c4c4c4"></div>
<svg width="265" height="19" style="position:absolute;left:730px;top:241px"><rect x="8.3" y="15" width="1" height="3" fill="#555"/><rect x="21.0" y="15" width="1" height="3" fill="#555"/><rect x="33.6" y="15" width="1" height="3" fill="#555"/><rect x="46.2" y="15" width="1" height="3" fill="#555"/><rect x="58.9" y="15" width="1" height="3" fill="#555"/><rect x="71.5" y="15" width="1" height="3" fill="#555"/><rect x="84.2" y="15" width="1" height="3" fill="#555"/><rect x="96.8" y="15" width="1" height="3" fill="#555"/><rect x="109.5" y="15" width="1" height="3" fill="#555"/><rect x="122.2" y="15" width="1" height="3" fill="#555"/><rect x="134.8" y="15" width="1" height="3" fill="#555"/><rect x="147.5" y="15" width="1" height="3" fill="#555"/><rect x="160.1" y="15" width="1" height="3" fill="#555"/><rect x="172.8" y="15" width="1" height="3" fill="#555"/><rect x="185.4" y="15" width="1" height="3" fill="#555"/><rect x="198.1" y="15" width="1" height="3" fill="#555"/><rect x="210.7" y="15" width="1" height="3" fill="#555"/><rect x="223.4" y="15" width="1" height="3" fill="#555"/><rect x="236.0" y="15" width="1" height="3" fill="#555"/><rect x="248.7" y="15" width="1" height="3" fill="#555"/><rect x="261.3" y="15" width="1" height="3" fill="#555"/></svg>
<svg width="7" height="10" style="position:absolute;left:851px;top:244px"><path d="M0 0 H6.5 V6.5 L3.25 9.7 L0 6.5Z" fill="#0b63c6"/></svg>
<div class="a" style="left:691.80px;top:271.58px;font:normal bold 12.03px/12.03px 'Liberation Sans',sans-serif;color:#4a0c0c;transform:scaleX(0.9525);transform-origin:0 0;">Size</div>
<div style="position:absolute;left:721px;top:266.5px;width:162.5px;height:22px;background:#f4f7f2;border:solid;border-width:2px 1px 1px 2px;border-color:#4e4e4e #e6e6e6 #e6e6e6 #4e4e4e"></div>
<div style="position:absolute;left:731px;top:271px;width:13px;height:13px;border-radius:50%;border:3.5px solid #0b5fb8;background:#fff"></div>
<div class="a" style="left:750.00px;top:272.48px;font:normal bold 12.03px/12.03px 'Liberation Sans',sans-serif;color:#3a0c0c;transform:scaleX(0.9036);transform-origin:0 0;">normal</div>
<div style="position:absolute;left:795px;top:271px;width:13px;height:13px;border-radius:50%;border:1px solid #333"></div>
<div class="a" style="left:813.70px;top:272.68px;font:normal bold 12.03px/12.03px 'Liberation Sans',sans-serif;color:#3a0c0c;transform:scaleX(1.0597);transform-origin:0 0;">x&#160;2</div>
<div style="position:absolute;left:839px;top:271px;width:13px;height:13px;border-radius:50%;border:1px solid #333"></div>
<div class="a" style="left:857.80px;top:272.68px;font:normal bold 12.03px/12.03px 'Liberation Sans',sans-serif;color:#3a0c0c;transform:scaleX(1.0597);transform-origin:0 0;">x&#160;5</div>
<div class="a" style="left:906.90px;top:272.06px;font:normal bold 12.75px/12.75px 'Liberation Sans',sans-serif;color:#5a0c5e;transform:scaleX(0.8819);transform-origin:0 0;">Form&#160;opacity</div>
<div style="position:absolute;left:885px;top:289px;width:110px;height:21px;background:#fdf9cf"></div>
<div style="position:absolute;left:891px;top:295px;width:102px;height:4px;background:#e2e2e2;border:1px solid #c4c4c4"></div>
<svg width="110" height="21" style="position:absolute;left:885px;top:289px"><rect x="10.7" y="16.6" width="1" height="4" fill="#555"/><rect x="29.5" y="16.6" width="1" height="4" fill="#555"/><rect x="48.3" y="16.6" width="1" height="4" fill="#555"/><rect x="67.2" y="16.6" width="1" height="4" fill="#555"/><rect x="86.0" y="16.6" width="1" height="4" fill="#555"/><rect x="104.8" y="16.6" width="1" height="4" fill="#555"/></svg>
<svg width="9" height="13" style="position:absolute;left:985px;top:291px"><path d="M0 0 H8 V9 L4 12.5 L0 9Z" fill="#0b63c6"/></svg>
<div class="a" style="left:693.00px;top:297.50px;font:normal bold 11.88px/11.88px 'Liberation Sans',sans-serif;color:#4a0c0c;">Scroll&#160;range&#160;x1.25</div>
<div style="position:absolute;left:803px;top:296px;width:13px;height:13px;border:1px solid #333;border-radius:2.5px;background:#fff"></div>
<div class="a" style="left:677.50px;top:326.89px;font:normal normal 11.30px/11.30px 'Liberation Sans',sans-serif;color:#000;-webkit-text-stroke:0.3px #000;transform:scaleX(0.9346);transform-origin:0 0;">RMS&#160;fit&#160;64.0&#160;±6.3&#160;km</div>
<div style="position:absolute;left:669px;top:345px;width:330px;height:269px;background-color:#f8fafa;background-image:conic-gradient(at 1px 1px,transparent 270deg,#c8e0ea 0),conic-gradient(at 1px 1px,transparent 270deg,#ecc8d8 0);background-size:10px 6px,10px 6px;background-position:0 0,5px 3px;border-left:2px solid #4a4a4a;border-top:2px solid #4a4a4a"></div>
<div style="position:absolute;left:669px;top:614px;width:2px;height:13px;background:#4a4a4a"></div>
<div style="position:absolute;left:669px;top:626.5px;width:326px;height:1px;background:#c8c8c8"></div>
<div style="position:absolute;left:688px;top:618px;width:257px;height:2px;background:#555"></div>
<div style="position:absolute;left:676px;top:352px;width:66px;height:3px;background:#4a0c8c;border-radius:1.5px"></div>
<div style="position:absolute;left:676px;top:364px;width:66px;height:3px;background:#ff1414;border-radius:1.5px"></div>
<div style="position:absolute;left:676.7px;top:377px;width:4px;height:4px;background:#e864b4;border-radius:50%"></div>
<div style="position:absolute;left:691.7px;top:377px;width:4px;height:4px;background:#e864b4;border-radius:50%"></div>
<div style="position:absolute;left:706.7px;top:377px;width:4px;height:4px;background:#e864b4;border-radius:50%"></div>
<div style="position:absolute;left:721.7px;top:377px;width:4px;height:4px;background:#e864b4;border-radius:50%"></div>
<div style="position:absolute;left:736.7px;top:377px;width:4px;height:4px;background:#e864b4;border-radius:50%"></div>
<div class="a" style="left:765.30px;top:351.08px;font:normal normal 11.21px/11.21px 'Liberation Mono',monospace;color:#000;-webkit-text-stroke:0.3px #000;transform:scaleX(1.2197);transform-origin:0 0;">1&#160;&#160;&#160;&#160;T&#160;George,&#160;near&#160;Scottsdale</div>
<div class="a" style="left:765.30px;top:362.98px;font:normal normal 11.21px/11.21px 'Liberation Mono',monospace;color:#000;-webkit-text-stroke:0.3px #000;transform:scaleX(1.2197);transform-origin:0 0;">2&#160;&#160;&#160;&#160;P&#160;Maley,&#160;near&#160;Cordes&#160;Lakes</div>
<div class="a" style="left:765.30px;top:374.58px;font:normal normal 11.21px/11.21px 'Liberation Mono',monospace;color:#000;-webkit-text-stroke:0.3px #000;transform:scaleX(1.2197);transform-origin:0 0;">3(P)&#160;Predicted</div>
<div style="position:absolute;left:497.5px;top:455.5px;width:450px;height:132.5px;background:#aec2de;border:1.5px solid #3c3c3c;border-right-width:1px"></div>
<div class="a" style="left:501.00px;top:463.66px;font:normal bold 12.75px/12.75px 'Liberation Sans',sans-serif;color:#182848;transform:scaleX(0.9290);transform-origin:0 0;">DAMIT</div>
<div style="position:absolute;left:545.2px;top:459.2px;width:14.199999999999932px;height:17.8px;background:#d4a4dc;border:2.2px solid #fafafa;border-radius:3px"></div>
<div class="a" style="left:549.50px;top:463.65px;font:normal normal 12.17px/12.17px 'Liberation Sans',sans-serif;color:#3a1a4a;-webkit-text-stroke:0.3px #3a1a4a;">1</div>
<div style="position:absolute;left:563px;top:459.2px;width:14.399999999999977px;height:17.8px;background:#f4b8c4;border:2.2px solid #fafafa;border-radius:3px"></div>
<div class="a" style="left:566.50px;top:463.65px;font:normal bold 12.17px/12.17px 'Liberation Sans',sans-serif;color:#000;">2</div>
<div style="position:absolute;left:580.6px;top:459.2px;width:15.299999999999955px;height:17.8px;background:#f1f1f3;border:2.2px solid #f7f7f7;border-radius:3px"></div>
<div class="a" style="left:584.90px;top:463.65px;font:normal bold 12.17px/12.17px 'Liberation Sans',sans-serif;color:#a8a8a8;">3</div>
<div style="position:absolute;left:598.3px;top:459.2px;width:15.300000000000068px;height:17.8px;background:#f1f1f3;border:2.2px solid #f7f7f7;border-radius:3px"></div>
<div class="a" style="left:602.60px;top:463.65px;font:normal bold 12.17px/12.17px 'Liberation Sans',sans-serif;color:#a8a8a8;">4</div>
<div style="position:absolute;left:616px;top:459.2px;width:15.200000000000045px;height:17.8px;background:#f1f1f3;border:2.2px solid #f7f7f7;border-radius:3px"></div>
<div class="a" style="left:620.30px;top:463.65px;font:normal bold 12.17px/12.17px 'Liberation Sans',sans-serif;color:#a8a8a8;">5</div>
<div style="position:absolute;left:633.7px;top:459.2px;width:15.299999999999955px;height:17.8px;background:#f1f1f3;border:2.2px solid #f7f7f7;border-radius:3px"></div>
<div class="a" style="left:638.00px;top:463.65px;font:normal bold 12.17px/12.17px 'Liberation Sans',sans-serif;color:#a8a8a8;">6</div>
<div style="position:absolute;left:655.9px;top:459.8px;width:69.1px;height:17.7px;background:#b4ecf6;border:2.2px solid #fafafa;border-radius:3px"></div>
<div class="a" style="left:661.50px;top:463.21px;font:normal normal 12.46px/12.46px 'Liberation Sans',sans-serif;color:#000;-webkit-text-stroke:0.3px #000;transform:scaleX(0.8504);transform-origin:0 0;">Light&#160;curves</div>
<div class="a" style="left:732.30px;top:463.96px;font:normal bold 12.75px/12.75px 'Liberation Sans',sans-serif;color:#182848;transform:scaleX(0.9318);transform-origin:0 0;">ISAM</div>
<div style="position:absolute;left:768.4px;top:459.2px;width:15.5px;height:17.8px;background:#f1f1f3;border:2.2px solid #f7f7f7;border-radius:3px"></div>
<div class="a" style="left:773.00px;top:463.65px;font:normal bold 12.17px/12.17px 'Liberation Sans',sans-serif;color:#a8a8a8;">1</div>
<div style="position:absolute;left:792.25px;top:459.2px;width:15.5px;height:17.8px;background:#f1f1f3;border:2.2px solid #f7f7f7;border-radius:3px"></div>
<div class="a" style="left:796.85px;top:463.65px;font:normal bold 12.17px/12.17px 'Liberation Sans',sans-serif;color:#a8a8a8;">2</div>
<div style="position:absolute;left:816.1px;top:459.2px;width:15.5px;height:17.8px;background:#f1f1f3;border:2.2px solid #f7f7f7;border-radius:3px"></div>
<div class="a" style="left:820.70px;top:463.65px;font:normal bold 12.17px/12.17px 'Liberation Sans',sans-serif;color:#a8a8a8;">3</div>
<div style="position:absolute;left:839.95px;top:459.2px;width:15.5px;height:17.8px;background:#f1f1f3;border:2.2px solid #f7f7f7;border-radius:3px"></div>
<div class="a" style="left:844.55px;top:463.65px;font:normal bold 12.17px/12.17px 'Liberation Sans',sans-serif;color:#a8a8a8;">4</div>
<div style="position:absolute;left:863.8px;top:459.2px;width:15.5px;height:17.8px;background:#f1f1f3;border:2.2px solid #f7f7f7;border-radius:3px"></div>
<div class="a" style="left:868.40px;top:463.65px;font:normal bold 12.17px/12.17px 'Liberation Sans',sans-serif;color:#a8a8a8;">5</div>
<div style="position:absolute;left:887.65px;top:459.2px;width:15.5px;height:17.8px;background:#f1f1f3;border:2.2px solid #f7f7f7;border-radius:3px"></div>
<div class="a" style="left:892.25px;top:463.65px;font:normal bold 12.17px/12.17px 'Liberation Sans',sans-serif;color:#a8a8a8;">6</div>
<div style="position:absolute;left:915px;top:461px;width:10.5px;height:13px;background:#1a28b0;box-shadow:0 0 0 2px #f4f4f4"></div>
<div class="a" style="left:917.30px;top:462.21px;font:normal bold 13.04px/13.04px 'Liberation Sans',sans-serif;color:#ffe800;transform:scaleX(0.7161);transform-origin:0 0;">?</div>
<div style="position:absolute;left:931.2px;top:461px;width:10.5px;height:13px;background:#d8102a;box-shadow:0 0 0 2px #f4f4f4"></div>
<div class="a" style="left:932.50px;top:461.83px;font:normal bold 12.32px/12.32px 'Liberation Sans',sans-serif;color:#fff;transform:scaleX(0.9754);transform-origin:0 0;">X</div>
<div class="a" style="left:506.30px;top:480.38px;font:normal normal 12.03px/12.03px 'Liberation Sans',sans-serif;color:#182848;-webkit-text-stroke:0.3px #182848;transform:scaleX(0.8615);transform-origin:0 0;">Source</div>
<div class="a" style="left:565.30px;top:480.38px;font:normal normal 12.03px/12.03px 'Liberation Sans',sans-serif;color:#182848;-webkit-text-stroke:0.3px #182848;transform:scaleX(0.8073);transform-origin:0 0;">ID</div>
<div class="a" style="left:599.00px;top:480.38px;font:normal normal 12.03px/12.03px 'Liberation Sans',sans-serif;color:#182848;-webkit-text-stroke:0.3px #182848;transform:scaleX(0.9007);transform-origin:0 0;">Surf/Vol</div>
<div style="position:absolute;left:503.1px;top:493px;width:39.19999999999993px;height:18.5px;background:#f3f3f3;border-bottom:1px solid #707070;border-radius:2px 2px 0 0"></div>
<div style="position:absolute;left:544px;top:493px;width:53.5px;height:18.5px;background:#f3f3f3;border-bottom:1px solid #707070;border-radius:2px 2px 0 0"></div>
<div style="position:absolute;left:599.4px;top:493px;width:37.80000000000007px;height:18.5px;background:#f3f3f3;border-bottom:1px solid #707070;border-radius:2px 2px 0 0"></div>
<div class="a" style="left:506.60px;top:497.77px;font:normal normal 11.45px/11.45px 'Liberation Sans',sans-serif;color:#000;-webkit-text-stroke:0.3px #000;transform:scaleX(0.8825);transform-origin:0 0;">DAMIT</div>
<div class="a" style="left:547.20px;top:497.77px;font:normal normal 11.45px/11.45px 'Liberation Sans',sans-serif;color:#000;-webkit-text-stroke:0.3px #000;transform:scaleX(0.9197);transform-origin:0 0;">5984</div>
<div class="a" style="left:602.30px;top:497.77px;font:normal normal 11.45px/11.45px 'Liberation Sans',sans-serif;color:#000;-webkit-text-stroke:0.3px #000;transform:scaleX(0.9259);transform-origin:0 0;">1.013</div>
<div style="position:absolute;left:501.5px;top:513.1px;width:33.3px;height:20.1px;background:#ffff00;border:1.6px solid #2a2a2a"></div>
<div class="a" style="left:509.00px;top:517.44px;font:normal bold 12.90px/12.90px 'Liberation Sans',sans-serif;color:#000;transform:scaleX(0.8834);transform-origin:0 0;">Dia</div>
<div class="a" style="left:539.10px;top:516.14px;font:italic normal 11.59px/11.59px 'Liberation Sans',sans-serif;color:#182848;-webkit-text-stroke:0.3px #182848;transform:scaleX(0.8828);transform-origin:0 0;">Values&#160;in&#160;memory&#160;=&gt;</div>
<div style="position:absolute;left:639px;top:479.5px;width:302px;height:49.5px;background:#fffad8;border-left:2px solid #4a4a4a;border-top:2px solid #4a4a4a"></div>
<div class="a" style="left:664.00px;top:481.90px;font:normal normal 11.88px/11.88px 'Liberation Sans',sans-serif;color:#000;-webkit-text-stroke:0.3px #000;transform:scaleX(0.8363);transform-origin:0 0;">Fit&#160;quality</div>
<div class="a" style="left:741.00px;top:481.90px;font:normal normal 11.88px/11.88px 'Liberation Sans',sans-serif;color:#000;-webkit-text-stroke:0.3px #000;transform:scaleX(0.8602);transform-origin:0 0;">Ph&#160;Corm</div>
<div class="a" style="left:792.30px;top:481.60px;font:normal normal 11.88px/11.88px 'Liberation Sans',sans-serif;color:#000;-webkit-text-stroke:0.3px #000;transform:scaleX(0.8454);transform-origin:0 0;">Minimum&#160;dia</div>
<div class="a" style="left:868.50px;top:482.40px;font:normal normal 11.88px/11.88px 'Liberation Sans',sans-serif;color:#000;-webkit-text-stroke:0.3px #000;transform:scaleX(0.8399);transform-origin:0 0;">Maximum&#160;dia</div>
<div style="position:absolute;left:642.2px;top:494.4px;width:96.5px;height:20.1px;background:#fcfcfc;border:1px solid #6c6c6c"></div>
<div style="position:absolute;left:645px;top:497.1px;width:43.9px;height:12.6px;background:#0a58d0"></div>
<div class="a" style="left:645.50px;top:498.21px;font:normal normal 12.46px/12.46px 'Liberation Sans',sans-serif;color:#fff;-webkit-text-stroke:0.3px #fff;transform:scaleX(0.8468);transform-origin:0 0;">Not&#160;fitted</div>
<svg width="10" height="7" style="position:absolute;left:725px;top:501px"><path d="M1 1 L5 5.5 L9 1" stroke="#333" stroke-width="1.2" fill="none"/></svg>
<div class="a" style="left:645.00px;top:515.91px;font:normal normal 12.46px/12.46px 'Liberation Sans',sans-serif;color:#3a0a5a;-webkit-text-stroke:0.3px #3a0a5a;transform:scaleX(0.8227);transform-origin:0 0;">Not&#160;fitted</div>
<div style="position:absolute;left:743.5px;top:494.4px;width:37.8px;height:17.7px;background:#f3f3f3;border-bottom:1px solid #606060"></div>
<div class="a" style="left:746.00px;top:498.45px;font:normal normal 12.17px/12.17px 'Liberation Sans',sans-serif;color:#000;-webkit-text-stroke:0.3px #000;transform:scaleX(1.0325);transform-origin:0 0;">0°</div>
<div class="a" style="left:745.00px;top:515.45px;font:normal normal 12.17px/12.17px 'Liberation Sans',sans-serif;color:#4a0a6a;-webkit-text-stroke:0.3px #4a0a6a;transform:scaleX(1.0325);transform-origin:0 0;">0°</div>
<div style="position:absolute;left:790.3px;top:495.1px;width:36.7px;height:18px;background:#f4c4d0;border-bottom:1px solid #606060"></div>
<div style="position:absolute;left:829.5px;top:494.3px;width:29.9px;height:23.1px;background:#9cf41c;border:2.5px solid #f6f6f6;border-radius:2px"></div>
<div class="a" style="left:836.40px;top:500.15px;font:normal normal 12.17px/12.17px 'Liberation Sans',sans-serif;color:#000;-webkit-text-stroke:0.3px #000;transform:scaleX(0.8440);transform-origin:0 0;">Set</div>
<div style="position:absolute;left:868px;top:495.1px;width:36.7px;height:18px;background:#f4c4d0;border-bottom:1px solid #606060"></div>
<div style="position:absolute;left:907.3px;top:494.3px;width:29.9px;height:23.1px;background:#9cf41c;border:2.5px solid #f6f6f6;border-radius:2px"></div>
<div class="a" style="left:914.10px;top:500.15px;font:normal normal 12.17px/12.17px 'Liberation Sans',sans-serif;color:#000;-webkit-text-stroke:0.3px #000;transform:scaleX(0.8440);transform-origin:0 0;">Set</div>
<div style="position:absolute;left:791.1px;top:521px;width:3.5px;height:1.3px;background:#1a2a5a"></div>
<div style="position:absolute;left:797.1px;top:521px;width:3.5px;height:1.3px;background:#1a2a5a"></div>
<div style="position:absolute;left:803.1px;top:521px;width:3.5px;height:1.3px;background:#1a2a5a"></div>
<div style="position:absolute;left:809.1px;top:521px;width:3.5px;height:1.3px;background:#1a2a5a"></div>
<div style="position:absolute;left:868.8px;top:521px;width:3.5px;height:1.3px;background:#1a2a5a"></div>
<div style="position:absolute;left:874.8px;top:521px;width:3.5px;height:1.3px;background:#1a2a5a"></div>
<div style="position:absolute;left:880.8px;top:521px;width:3.5px;height:1.3px;background:#1a2a5a"></div>
<div style="position:absolute;left:886.8px;top:521px;width:3.5px;height:1.3px;background:#1a2a5a"></div>
<div class="a" style="left:506.10px;top:536.50px;font:normal normal 11.88px/11.88px 'Liberation Sans',sans-serif;color:#182848;-webkit-text-stroke:0.3px #182848;transform:scaleX(0.8670);transform-origin:0 0;">Version&#160;info</div>
<div style="position:absolute;left:565.9px;top:533.5px;width:270px;height:18px;background:#f2f2f2;border-bottom:1px solid #707070;border-radius:2px 2px 0 0"></div>
<div class="a" style="left:569.30px;top:537.60px;font:normal normal 11.88px/11.88px 'Liberation Sans',sans-serif;color:#000;-webkit-text-stroke:0.3px #000;transform:scaleX(0.8722);transform-origin:0 0;">2022-02-14,&#160;Q=1</div>
<div class="a" style="left:505.30px;top:561.50px;font:normal normal 11.88px/11.88px 'Liberation Sans',sans-serif;color:#182848;-webkit-text-stroke:0.3px #182848;transform:scaleX(0.8668);transform-origin:0 0;">Image&#160;scale</div>
<div style="position:absolute;left:566.8px;top:558.3px;width:269px;height:21.4px;background:#fdf9cf"></div>
<div style="position:absolute;left:572px;top:574px;width:263px;height:3.5px;background:#e2e2e2;border:1px solid #c8c8c8"></div>
<svg width="269" height="22" style="position:absolute;left:566.8px;top:558.3px"><rect x="10.8" y="5.2" width="1" height="3.6" fill="#666"/><rect x="16.7" y="5.2" width="1" height="3.6" fill="#666"/><rect x="22.6" y="5.2" width="1" height="3.6" fill="#666"/><rect x="28.5" y="5.2" width="1" height="3.6" fill="#666"/><rect x="34.4" y="5.2" width="1" height="3.6" fill="#666"/><rect x="40.3" y="5.2" width="1" height="3.6" fill="#666"/><rect x="46.2" y="5.2" width="1" height="3.6" fill="#666"/><rect x="52.1" y="5.2" width="1" height="3.6" fill="#666"/><rect x="58.0" y="5.2" width="1" height="3.6" fill="#666"/><rect x="63.9" y="5.2" width="1" height="3.6" fill="#666"/><rect x="69.8" y="5.2" width="1" height="3.6" fill="#666"/><rect x="75.7" y="5.2" width="1" height="3.6" fill="#666"/><rect x="81.6" y="5.2" width="1" height="3.6" fill="#666"/><rect x="87.5" y="5.2" width="1" height="3.6" fill="#666"/><rect x="93.4" y="5.2" width="1" height="3.6" fill="#666"/><rect x="99.3" y="5.2" width="1" height="3.6" fill="#666"/><rect x="105.2" y="5.2" width="1" height="3.6" fill="#666"/><rect x="111.1" y="5.2" width="1" height="3.6" fill="#666"/><rect x="117.0" y="5.2" width="1" height="3.6" fill="#666"/><rect x="122.9" y="5.2" width="1" height="3.6" fill="#666"/><rect x="128.8" y="5.2" width="1" height="3.6" fill="#666"/><rect x="134.7" y="5.2" width="1" height="3.6" fill="#666"/><rect x="140.6" y="5.2" width="1" height="3.6" fill="#666"/><rect x="146.5" y="5.2" width="1" height="3.6" fill="#666"/><rect x="152.4" y="5.2" width="1" height="3.6" fill="#666"/><rect x="158.3" y="5.2" width="1" height="3.6" fill="#666"/><rect x="164.2" y="5.2" width="1" height="3.6" fill="#666"/><rect x="170.1" y="5.2" width="1" height="3.6" fill="#666"/><rect x="176.0" y="5.2" width="1" height="3.6" fill="#666"/><rect x="181.9" y="5.2" width="1" height="3.6" fill="#666"/><rect x="187.8" y="5.2" width="1" height="3.6" fill="#666"/><rect x="193.7" y="5.2" width="1" height="3.6" fill="#666"/><rect x="199.6" y="5.2" width="1" height="3.6" fill="#666"/><rect x="205.5" y="5.2" width="1" height="3.6" fill="#666"/><rect x="211.4" y="5.2" width="1" height="3.6" fill="#666"/><rect x="217.3" y="5.2" width="1" height="3.6" fill="#666"/><rect x="223.2" y="5.2" width="1" height="3.6" fill="#666"/><rect x="229.1" y="5.2" width="1" height="3.6" fill="#666"/><rect x="235.0" y="5.2" width="1" height="3.6" fill="#666"/><rect x="240.9" y="5.2" width="1" height="3.6" fill="#666"/><rect x="246.8" y="5.2" width="1" height="3.6" fill="#666"/><rect x="252.7" y="5.2" width="1" height="3.6" fill="#666"/><rect x="258.6" y="5.2" width="1" height="3.6" fill="#666"/></svg>
<svg width="9" height="11" style="position:absolute;left:651.8px;top:569.4px"><path d="M0 10.5 V4.2 A4.2 4.2 0 0 1 8.4 4.2 V10.5Z" fill="#0b63c6"/></svg>
<div style="position:absolute;left:845.3px;top:536.5px;width:97.6px;height:46.3px;background:#f6c0cc;border:2.6px solid #f8f8f8;border-radius:3px"></div>
<div class="a" style="left:856.60px;top:546.81px;font:normal bold 13.04px/13.04px 'Liberation Sans',sans-serif;color:#740e1a;transform:scaleX(0.9522);transform-origin:0 0;">Save/update</div>
<div class="a" style="left:859.40px;top:559.41px;font:normal bold 13.04px/13.04px 'Liberation Sans',sans-serif;color:#740e1a;transform:scaleX(0.9241);transform-origin:0 0;">model&#160;5984</div></body></html>
